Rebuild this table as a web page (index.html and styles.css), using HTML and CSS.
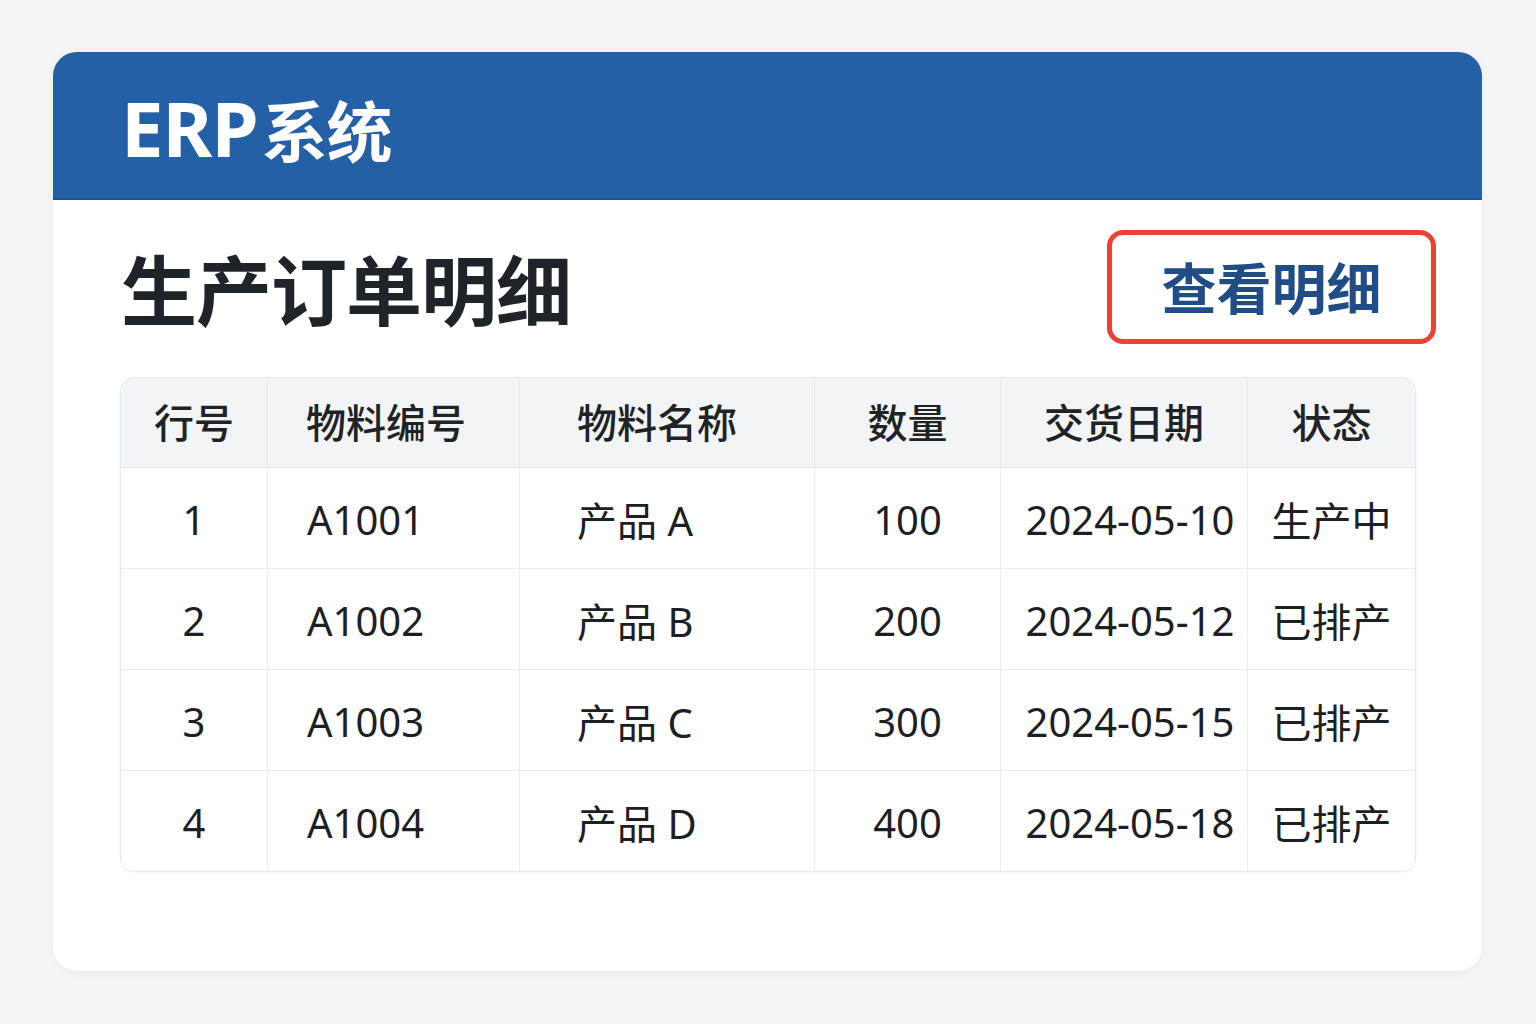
FILE: index.html
```html
<!DOCTYPE html>
<html lang="zh-CN">
<head>
<meta charset="utf-8">
<title>ERP系统</title>
<link rel="stylesheet" href="styles.css">
</head>
<body>
<div class="card">
  <header class="topbar">
    <h1 class="brand"><span class="brand-latin">ERP</span>系统</h1>
  </header>
  <main class="content">
    <div class="title-row">
      <h2 class="page-title">生产订单明细</h2>
      <button class="detail-btn">查看明细</button>
    </div>
    <table class="orders">
      <colgroup>
        <col class="c1"><col class="c2"><col class="c3"><col class="c4"><col class="c5"><col class="c6">
      </colgroup>
      <thead>
        <tr>
          <th class="center">行号</th>
          <th class="left2">物料编号</th>
          <th class="left3">物料名称</th>
          <th class="center">数量</th>
          <th class="center">交货日期</th>
          <th class="center">状态</th>
        </tr>
      </thead>
      <tbody>
        <tr><td class="center">1</td><td class="left2">A1001</td><td class="left3">产品 A</td><td class="center">100</td><td class="center date">2024-05-10</td><td class="center">生产中</td></tr>
        <tr><td class="center">2</td><td class="left2">A1002</td><td class="left3">产品 B</td><td class="center">200</td><td class="center date">2024-05-12</td><td class="center">已排产</td></tr>
        <tr><td class="center">3</td><td class="left2">A1003</td><td class="left3">产品 C</td><td class="center">300</td><td class="center date">2024-05-15</td><td class="center">已排产</td></tr>
        <tr><td class="center">4</td><td class="left2">A1004</td><td class="left3">产品 D</td><td class="center">400</td><td class="center date">2024-05-18</td><td class="center">已排产</td></tr>
      </tbody>
    </table>
  </main>
</div>
</body>
</html>
```

FILE: styles.css
```css
html, body {
  margin: 0;
  padding: 0;
}
body {
  background: #f5f5f5;
  font-family: "Noto Sans", "Noto Sans CJK SC", sans-serif;
  color: #1f2326;
  width: 1536px;
  height: 1024px;
  overflow: hidden;
}
.card {
  margin: 52px 0 0 53px;
  width: 1429px;
  height: 919px;
  background: #ffffff;
  border-radius: 24px;
  overflow: hidden;
  box-shadow: 0 2px 10px rgba(0, 0, 0, 0.05);
}
.topbar {
  height: 146px;
  background: #2360a6;
  border-bottom: 2px solid #1d5494;
  display: flex;
  align-items: center;
  padding-left: 68px;
}
.brand {
  margin: 6px 0 0 0;
  color: #ffffff;
  font-family: "Noto Sans CJK SC", sans-serif;
  font-weight: 700;
  font-size: 66px;
  line-height: 1;
  letter-spacing: -1px;
}
.brand-latin {
  font-family: "Noto Sans", sans-serif;
  font-size: 76px;
  letter-spacing: -1px;
  margin-right: 4px;
}
.content {
  padding: 30px 66px 0 67px;
}
.title-row {
  display: flex;
  justify-content: space-between;
  align-items: center;
  height: 114px;
  margin-right: -20px;
}
.page-title {
  margin: 0 0 0 1px;
  font-family: "Noto Sans CJK SC", sans-serif;
  font-size: 76px;
  font-weight: 700;
  color: #1e2428;
  letter-spacing: -1px;
  line-height: 1;
}
.detail-btn {
  width: 329px;
  height: 114px;
  box-sizing: border-box;
  border: 5px solid #ea4336;
  border-radius: 16px;
  background: #ffffff;
  color: #1f4d84;
  font-family: "Noto Sans CJK SC", sans-serif;
  font-size: 55px;
  font-weight: 700;
  padding: 0 0 4px 0;
  cursor: pointer;
}
.orders {
  margin-top: 33px;
  width: 1296px;
  table-layout: fixed;
  border-collapse: separate;
  border-spacing: 0;
  border: 1px solid #e8e8e8;
  border-radius: 14px;
  overflow: hidden;
  box-shadow: 0 1px 3px rgba(0, 0, 0, 0.04);
}
.c1 { width: 147px; }
.c2 { width: 252px; }
.c3 { width: 295px; }
.c4 { width: 186px; }
.c5 { width: 247px; }
.c6 { width: 167px; }
.orders th {
  height: 85px;
  background: #f3f4f5;
  font-family: "Noto Sans CJK SC", sans-serif;
  font-weight: 500;
  font-size: 40px;
  color: #1f2326;
  padding: 0 0 4px 0;
  border-right: 1px solid #e8e8e8;
  border-bottom: 1px solid #e8e8e8;
}
.orders td {
  height: 98px;
  font-size: 40px;
  font-weight: 400;
  color: #1c2024;
  padding: 2px 0 0 0;
  border-right: 1px solid #ececec;
  border-bottom: 1px solid #ececec;
}
.orders th:last-child, .orders td:last-child {
  border-right: none;
}
.orders tbody tr:last-child td {
  border-bottom: none;
}
.center { text-align: center; }
.orders .date { padding-left: 12px; }
.orders .left2 { text-align: left; padding-left: 39px; }
.orders .left3 { text-align: left; padding-left: 57px; }
.orders th.left2 { padding-left: 38px; }
```
